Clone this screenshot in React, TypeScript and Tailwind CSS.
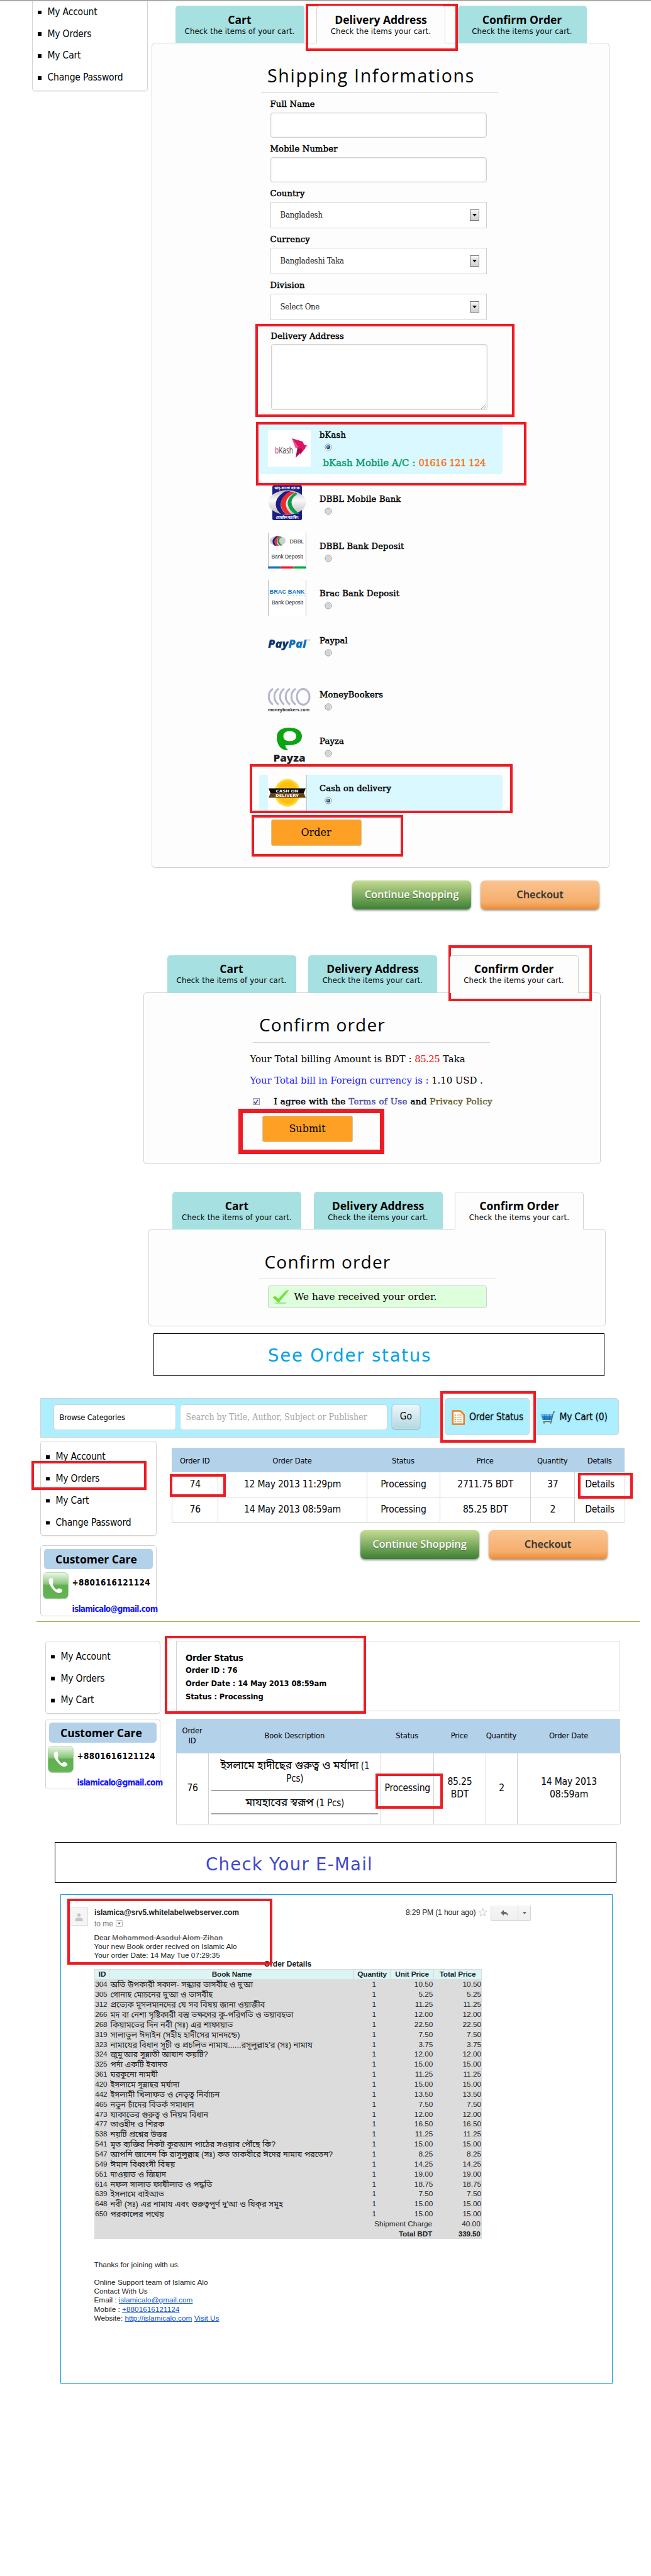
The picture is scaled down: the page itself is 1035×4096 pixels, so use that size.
import React from "react";

/* ---------- type styles ---------- */
const SANS = "font-['DejaVu_Sans_Condensed','DejaVu_Sans','Noto_Sans_Bengali',sans-serif] font-stretch-condensed";
const SLAB = "font-['DejaVu_Serif_Condensed','DejaVu_Serif',serif] font-stretch-condensed";
const WIDE_SLAB = "font-['DejaVu_Serif',serif]";
const HUMAN = "font-['Open_Sans','Noto_Sans',sans-serif]";
const ARIAL = "font-['Liberation_Sans','Noto_Sans_Bengali',Arial,sans-serif]";

/* ---------- shared widgets ---------- */
function Tabs({ active }: { active: number }) {
  const tabs = [
    ["Cart", "Check the items of your cart."],
    ["Delivery Address", "Check the items your cart."],
    ["Confirm Order", "Check the items your cart."],
  ];
  return (
    <div className="relative z-10 -mb-px flex h-[60px] gap-[19.5px] pl-[38px]">
      {tabs.map(([title, sub], i) => (
        <div
          key={title}
          className={
            "flex w-[205px] flex-col items-center rounded-t-[5px] pt-[10.5px] text-black " +
            (i === active ? "border border-b-0 border-[#d3d3d3] bg-[#fdfdfd]" : "border border-b-0 border-[#a6e0e0] bg-[#a6e0e0]")
          }
        >
          <div className={HUMAN + " whitespace-nowrap text-[17.5px] font-bold leading-[20px]"}>{title}</div>
          <div className={SANS + " whitespace-nowrap text-[13px] leading-[18px] tracking-[0.15px]"}>{sub}</div>
        </div>
      ))}
    </div>
  );
}

function PanelTitle({ children, type = "text-[28px] tracking-[1.2px]" }: { children: React.ReactNode; type?: string }) {
  return (
    <div className="ml-[173.5px] h-[79px] w-[377px] border-b border-[#d3d3d3] pl-[10px] pt-[30.5px]">
      <h1 className={HUMAN + " whitespace-nowrap font-medium leading-[40px] text-black " + type}>{children}</h1>
    </div>
  );
}

function SideMenu({ items, className }: { items: string[]; className: string }) {
  return (
    <ul className={"rounded-[5px] border border-[#d3d3d3] bg-white shadow-[0_1px_1px_rgba(0,0,0,0.08)] " + className}>
      {items.map((t) => (
        <li key={t} className={SANS + " flex h-[34.8px] items-center gap-[10px] whitespace-nowrap pl-[8px] text-[15.5px] tracking-[-0.2px] text-black"}>
          <span className="size-[5.5px] bg-black" />
          {t}
        </li>
      ))}
    </ul>
  );
}

function CustomerCare({ className }: { className: string }) {
  return (
    <div className={"rounded-[5px] border border-[#d3d3d3] bg-white " + className}>
      <div className={HUMAN + " mx-[5px] mt-[5px] flex h-[32px] items-center rounded-[5px] bg-[#b4d1ea] pl-[18px] text-[17.5px] font-bold text-black"}>
        Customer Care
      </div>
      <div className="ml-[3px] mt-[5px] flex gap-[5.5px]">
        <svg width="41" height="43" viewBox="0 0 41 43" className="shrink-0">
          <defs>
            <linearGradient id="tel" x1="0" y1="0" x2="0" y2="1">
              <stop offset="0" stopColor="#eef7ea" />
              <stop offset="0.44" stopColor="#8cc67c" />
              <stop offset="0.5" stopColor="#5fb04e" />
              <stop offset="1" stopColor="#62b652" />
            </linearGradient>
          </defs>
          <rect x="1" y="2" width="39" height="41" rx="6" fill="#000" opacity="0.25" />
          <rect x="0.5" y="0.5" width="40" height="41" rx="6" fill="url(#tel)" stroke="#8fc183" strokeWidth="0.6" />
          <path d="M12 9.500c2-1 3.500-.5 4 1.500.6 3 1 5 0 6.500-1 1.300 2 7 5 9.500 1.800 1.200 2.800-.8 4.500-1.500 1.800-.4 3.500.8 5 2.200 1.200 1.300.8 3-1 4.300-3 2-7.500 1.200-12-3.500C12.500 23 9.500 18 9.500 13c.1-1.800 1-3 2.500-3.500z" fill="#fff" />
        </svg>
        <div className={SANS + " whitespace-nowrap text-[13.3px] font-bold"}>
          <div className="mt-[7px] leading-[20px] tracking-[0.45px] text-black">+8801616121124</div>
          <div className="mt-[21.5px] leading-[20px] tracking-[-0.65px] text-[#1414ff]">islamicalo@gmail.com</div>
        </div>
      </div>
    </div>
  );
}

function CartButtons({ className }: { className: string }) {
  return (
    <div className={"flex gap-[15px] " + className}>
      <button className="h-[46.5px] w-[189px] rounded-[7px] bg-linear-to-b from-[#c5dc92] to-[#3a8034] font-['Open_Sans',sans-serif] text-[16.5px] font-semibold tracking-[-0.1px] text-white shadow-[0_2px_3px_rgba(0,0,0,0.4)] [text-shadow:0_1px_1px_rgba(0,0,0,0.4)]">
        Continue Shopping
      </button>
      <button className="h-[46.5px] w-[189px] rounded-[7px] bg-linear-to-b from-[#fbc491] via-[#f5ae6c] via-75% to-[#ef8a2c] font-['Open_Sans',sans-serif] text-[16.5px] font-semibold tracking-[-0.1px] text-[#333] shadow-[0_2px_3px_rgba(0,0,0,0.4)] [text-shadow:0_1px_1px_rgba(0,0,0,0.2)]">
        Checkout
      </button>
    </div>
  );
}

/* ---------- delivery form ---------- */
function Label({ children }: { children: React.ReactNode }) {
  return <div className={WIDE_SLAB + " h-[20px] whitespace-nowrap text-[13px] leading-[20px] tracking-[0.25px] text-black [-webkit-text-stroke:0.5px_#000]"}>{children}</div>;
}

function TextField({ label }: { label: string }) {
  return (
    <div className="h-[71px] pt-[7.500px]">
      <Label>{label}</Label>
      <div className="mt-[3px] h-[40.500px] w-[344px] rounded-[4px] border border-[#d0d0d0] bg-white shadow-[inset_0_0_3px_rgba(0,0,0,0.12)]" />
    </div>
  );
}

function SelectField({ label, value }: { label: string; value: string }) {
  return (
    <div className="h-[73px] pt-[8px]">
      <Label>{label}</Label>
      <div className="mt-[2.500px] flex h-[42.500px] w-[344px] items-center justify-between border border-[#d0d0d0] bg-white pl-[15px] pr-[11px]">
        <span className={SLAB + " text-[13px] tracking-[-0.2px] text-[#222]"}>{value}</span>
        <span className="flex h-[18.500px] w-[15px] items-center justify-center border border-[#777] bg-linear-to-b from-[#f4f4f4] to-[#cfcfcf]">
          <svg width="7" height="4" viewBox="0 0 7 4"><path d="M0 0h7L3.500 4z" fill="#000" /></svg>
        </span>
      </div>
    </div>
  );
}

function Radio({ on }: { on?: boolean }) {
  return (
    <svg width="12" height="12" viewBox="0 0 12 12" className="block">
      <circle cx="6" cy="6" r="5.100" fill="#f6f6f6" stroke="#8a8a8a" strokeWidth="0.9" />
      {on ? (
        <>
          <circle cx="6" cy="6" r="3.100" fill="#16507c" />
          <circle cx="5.400" cy="5.400" r="1.400" fill="#6cc3ee" />
        </>
      ) : (
        <circle cx="6" cy="6" r="3.400" fill="#d6d6d6" stroke="#bdbdbd" strokeWidth="0.6" />
      )}
    </svg>
  );
}

function DbblStripes() {
  return (
    <>
      <path d="M27 2C10 14 8 34 21 47h7C16 33 18 15 36 1z" fill="#1d1d84" />
      <path d="M35 2C18 13 17 33 28 47h9C24 32 26 14 43 4z" fill="#ef2b2d" />
      <path d="M44 4C27 16 28 32 42 46h8C34 31 34 17 47 7z" fill="#0f9a4a" />
    </>
  );
}

const Logos: Record<string, React.ReactNode> = {
  bKash: (
    <svg width="68" height="58" viewBox="0 0 68 58">
      <rect width="68" height="58" fill="#fff" />
      <text x="11" y="37" fontSize="15" fontFamily="Open Sans" textLength="29" lengthAdjust="spacingAndGlyphs" fill="#444">
        <tspan fill="#d9146a">b</tspan>Kash
      </text>
      <path d="M38 13l17 5 5 10-9 11-3-12z" fill="#dd1264" />
      <path d="M38 13l6 16 5-2z" fill="#f0508f" />
      <path d="M47 27l-3 17 12-13z" fill="#a70d4b" />
      <path d="M54 27l4-4 5 2-3 1-5 7z" fill="#e2136e" />
    </svg>
  ),
  dbblMobile: (
    <svg width="61" height="55" viewBox="0 0 61 55">
      <defs>
        <linearGradient id="silver" x1="0" y1="0" x2="0" y2="1">
          <stop offset="0" stopColor="#bbb" /><stop offset="0.4" stopColor="#fafafa" /><stop offset="1" stopColor="#bdbdbd" />
        </linearGradient>
      </defs>
      <rect x="7" y="0" width="47" height="55" rx="2.500" fill="#1d1d84" />
      <ellipse cx="30.500" cy="27" rx="30" ry="19.500" fill="url(#silver)" />
      <g transform="translate(0 8) scale(1 .8)"><DbblStripes /></g>
      <text x="30.500" y="6.200" fontSize="5.500" fontWeight="700" textAnchor="middle" fill="#fff" textLength="40" fontFamily="Noto Sans Bengali, sans-serif">ডাচ্-বাংলা ব্যাংক</text>
      <text x="30.500" y="52.500" fontSize="5.500" fontWeight="700" textAnchor="middle" fill="#fff" textLength="36" fontFamily="Noto Sans Bengali, sans-serif">মোবাইল ব্যাংকিং</text>
    </svg>
  ),
  dbbl: (
    <svg width="61" height="57" viewBox="0 0 61 57">
      <rect width="61" height="57" fill="#fff" />
      <path d="M.5 0v53M60.500 0v53" stroke="#b5b5b5" />
      <ellipse cx="15.500" cy="13" rx="12.500" ry="8" fill="#cfcfcf" />
      <g transform="translate(2 4.800) scale(.42 .34)"><DbblStripes /></g>
      <text x="34.500" y="17" fontSize="8.500" fontFamily="Liberation Sans" textLength="23" lengthAdjust="spacingAndGlyphs" fill="#222">DBBL</text>
      <text x="5.500" y="40.500" fontSize="9" fontFamily="Liberation Sans" textLength="50" lengthAdjust="spacingAndGlyphs" fill="#111">Bank Deposit</text>
      <path d="M0 53.500h20.500v3.500H0z" fill="#1d72b8" />
      <path d="M20.500 53.500h20v3.500h-20z" fill="#f0182d" />
      <path d="M40.500 53.500H61v3.500H40.500z" fill="#05a64b" />
    </svg>
  ),
  brac: (
    <svg width="61" height="57" viewBox="0 0 61 57">
      <rect width="61" height="57" fill="#fff" />
      <path d="M.5 0v57M60.500 0v57" stroke="#b5b5b5" />
      <text x="2.500" y="22" fontSize="9" fontWeight="700" fontFamily="Liberation Sans" textLength="56" lengthAdjust="spacingAndGlyphs" fill="#1476c6">BRAC BANK</text>
      <path d="M31 24.500h28" stroke="#7fb2dc" strokeWidth="0.8" strokeDasharray="1.500 3" />
      <text x="6" y="38.500" fontSize="9" fontFamily="Liberation Sans" textLength="50" lengthAdjust="spacingAndGlyphs" fill="#111">Bank Deposit</text>
    </svg>
  ),
  paypal: (
    <svg width="68" height="56" viewBox="0 0 68 56">
      <text x="0" y="32.500" fontSize="17" fontWeight="800" fontStyle="italic" fontFamily="Open Sans" textLength="61" lengthAdjust="spacingAndGlyphs" fill="#0a3470">
        Pay<tspan fill="#0e70c0">Pal</tspan>
      </text>
      <text x="62.500" y="22" fontSize="3" fontFamily="Liberation Sans" fill="#7fb2dc">SM</text>
    </svg>
  ),
  moneybookers: (
    <svg width="68" height="56" viewBox="0 0 68 56">
      <g fill="none" stroke="#b5b5cf" strokeWidth="3">
        <ellipse cx="56" cy="25" rx="10" ry="12.500" />
        <path d="M8 12C-1 18 -1 31 8 37.500M17 12c-9 6-9 19 0 25.500M26 12c-9 6-9 19 0 25.500M35 12c-9 6-9 19 0 25.500M44 12c-9 6-9 19 0 25.500" />
      </g>
      <text x="0" y="47.500" fontSize="6.800" fontWeight="700" fontFamily="Open Sans" textLength="66" lengthAdjust="spacingAndGlyphs" fill="#222">moneybookers.com</text>
    </svg>
  ),
  payza: (
    <svg width="68" height="66" viewBox="0 0 68 66">
      <path fillRule="evenodd" d="M33.500 0C22 0 14 5 14 15c0 11 5 17 10 19.500 3 1.300 6 1.500 8.500 1.500-3-2.500-5-5-4.700-8C46 29 54 23 54 13.500 54 5 46 0 33.500 0zm1 5.500c6 0 10.500 3 10.500 8s-4.500 8-10.500 8-10-3-10-8 4-8 10-8z" fill="#0ba50f" />
      <text x="8.500" y="54" fontSize="16" fontWeight="800" fontFamily="Open Sans" textLength="51" lengthAdjust="spacingAndGlyphs" fill="#222">Payza</text>
    </svg>
  ),
  cash: (
    <svg width="62" height="57" viewBox="0 0 62 57">
      <rect width="61" height="57" fill="#fff" />
      <path d="M61 0v57" stroke="#aaa" />
      <ellipse cx="31" cy="28.500" rx="20" ry="21.500" fill="#ffd21c" stroke="#ffe25c" strokeWidth="2" strokeDasharray="1.500 1" />
      <ellipse cx="31" cy="28.500" rx="16" ry="17.500" fill="#fdbf16" />
      <path d="M1 21.500h59l-3 7.500H4z" fill="#0b0b0b" />
      <path d="M4 29h53l3 7.500H1z" fill="#6b3d0c" />
      <text x="12.500" y="27.700" fontSize="5.800" fontWeight="700" fontFamily="DejaVu Sans" textLength="36" fill="#fff" lengthAdjust="spacingAndGlyphs">CASH ON</text>
      <text x="12" y="35" fontSize="5.800" fontWeight="700" fontFamily="DejaVu Sans" textLength="37" fill="#fff" lengthAdjust="spacingAndGlyphs">DELIVERY</text>
    </svg>
  ),
};

function PayRow({ logo, label, on, last }: { logo: string; label: string; on?: boolean; last?: string }) {
  return (
    <div className={"flex h-[56.500px] w-[387px] rounded-[4px] " + (on ? "bg-[#d9f8ff] " : "") + (last ?? "mb-[18.300px]")}>
      <div className="ml-[14.500px] w-[82px]">{Logos[logo]}</div>
      <div className="pt-[12px]">
        <Label>{label}</Label>
        <div className="ml-[7.500px] mt-[3px]"><Radio on={on} /></div>
      </div>
    </div>
  );
}

function DeliveryForm() {
  return (
    <div className="h-[1312px] w-[728px] rounded-[5px] border border-[#d3d3d3] bg-[#fdfdfd]">
      <PanelTitle type="text-[28.500px] tracking-[1.700px]">Shipping Informations</PanelTitle>
      <div className="ml-[188px]">
        <TextField label="Full Name" />
        <TextField label="Mobile Number" />
        <SelectField label="Country" value="Bangladesh" />
        <SelectField label="Currency" value="Bangladeshi Taka" />
        <SelectField label="Division" value="Select One" />
        <div className="ml-px h-[142.500px] pt-[16px]">
          <Label>Delivery Address</Label>
          <div className="mt-[2px] flex h-[104.500px] w-[344px] items-end justify-end rounded-[4px] border border-[#d0d0d0] bg-white p-px shadow-[inset_0_0_3px_rgba(0,0,0,0.12)]">
            <svg width="8" height="8" viewBox="0 0 8 8"><path d="M0 8l8-8M4 8l4-4" stroke="#777" strokeDasharray="1 .6" /></svg>
          </div>
        </div>
      </div>
      <div className="ml-[170px] pt-[19px]">
        <div className="mb-[18.800px] flex h-[83px] w-[387px] rounded-[4px] bg-[#d9f8ff]">
          <div className="ml-[14.500px] mt-[13px] w-[82px]">{Logos.bKash}</div>
          <div className="pt-[11.500px]">
            <Label>bKash</Label>
            <div className="ml-[7.500px] mt-[3px]"><Radio on /></div>
            <div className={WIDE_SLAB + " ml-[5.500px] mt-[6.500px] whitespace-nowrap text-[14.800px] leading-[24px] tracking-[0.15px] text-[#0a9a6b] [-webkit-text-stroke:0.5px_#0a9a6b]"}>
              bKash Mobile A/C : <span className="tracking-[-0.5px] text-[#ff6a10] [-webkit-text-stroke:0.4px_#ff6a10]">01616 121 124</span>
            </div>
          </div>
        </div>
        <PayRow logo="dbblMobile" label="DBBL Mobile Bank" />
        <PayRow logo="dbbl" label="DBBL Bank Deposit" />
        <PayRow logo="brac" label="Brac Bank Deposit" />
        <PayRow logo="paypal" label="Paypal" last="mb-[29.500px]" />
        <PayRow logo="moneybookers" label="MoneyBookers" />
        <PayRow logo="payza" label="Payza" />
        <PayRow logo="cash" label="Cash on delivery" on last="mb-[14.500px]" />
        <button className={WIDE_SLAB + " ml-[19px] h-[42px] w-[144px] rounded-[3px] border border-[#d8c3a0] bg-[#fda024] text-[16px] text-black"}>Order</button>
      </div>
    </div>
  );
}

/* ---------- order tables ---------- */
function OrdersTable() {
  const cols = "grid grid-cols-[73.300px_236.400px_116.400px_144.100px_70.100px_79.700px]";
  const rows = [
    ["74", "12 May 2013 11:29pm", "Processing", "2711.75 BDT", "37", "Details"],
    ["76", "14 May 2013 08:59am", "Processing", "85.25 BDT", "2", "Details"],
  ];
  return (
    <div className={SANS + " w-[720px] text-black"}>
      <div className={cols + " h-[39px] items-center bg-[#b4d1ea] pt-[2px] text-center text-[12.800px] tracking-[-0.15px]"}>
        {["Order ID", "Order Date", "Status", "Price", "Quantity", "Details"].map((h) => <span key={h}>{h}</span>)}
      </div>
      {rows.map((r) => (
        <div key={r[0]} className={cols + " h-[39.750px] border-b border-l border-[#d3d3d3] text-center text-[15.500px] tracking-[-0.2px]"}>
          {r.map((c, i) => (
            <span key={i} className="flex items-center justify-center whitespace-nowrap border-r border-[#d3d3d3] pt-[1px]">{c}</span>
          ))}
        </div>
      ))}
    </div>
  );
}

function DetailTable() {
  const cols = "grid grid-cols-[51.200px_274.300px_83.500px_82.800px_50.400px_163.800px]";
  const cell = "flex flex-col items-center justify-center border-r border-[#d3d3d3]";
  return (
    <div className={SANS + " w-[706px] text-center text-black"}>
      <div className={cols + " h-[54.500px] items-center bg-[#b4d1ea] text-[12.800px] leading-[15.800px] tracking-[-0.15px]"}>
        <span>Order<br />ID</span><span>Book Description</span><span>Status</span><span>Price</span><span>Quantity</span><span>Order Date</span>
      </div>
      <div className={cols + " h-[113.500px] border-b border-l border-[#d3d3d3] text-[15.500px] leading-[19.500px] tracking-[-0.2px]"}>
        <div className={cell}>76</div>
        <div className="border-r border-[#d3d3d3] px-[4px] pt-[9px]">
          <div className="text-[15px] leading-[20.500px]"><span className="text-[17.500px]">ইসলামে হাদীছের গুরুত্ব ও মর্যাদা</span> (1<br />Pcs)</div>
          <div className="mt-[7px] h-[2px] bg-[#a5a5a5]" />
          <div className="mt-[8px] text-[15px] leading-[20px]"><span className="text-[17.500px]">মাযহাবের স্বরূপ</span> (1 Pcs)</div>
          <div className="mt-[6px] h-[2px] bg-[#a5a5a5]" />
        </div>
        <div className={cell}>Processing</div>
        <div className={cell}><span>85.25</span><span>BDT</span></div>
        <div className={cell}>2</div>
        <div className={cell}><span>14 May 2013</span><span>08:59am</span></div>
      </div>
    </div>
  );
}

const BOOKS: [string, string, string][] = [
  ["304", "অতি উপকারী সকাল- সন্ধ্যার তাসবীহ ও দু'আ", "10.50"],
  ["305", "গোনাহ মোচনের দু'আ ও তাসবীহ", "5.25"],
  ["312", "প্রত্যেক মুসলমানদের যে সব বিষয় জানা ওয়াজীব", "11.25"],
  ["266", "মদ বা নেশা সৃষ্টিকারী বস্তু ভক্ষণের কু-পরিণতি ও ভয়াবহতা", "12.00"],
  ["268", "কিয়ামতের দিন নবী (সঃ) এর শাফায়াত", "22.50"],
  ["319", "সালাতুল ঈদাইন (সহীহ হাদীসের মানদন্ডে)", "7.50"],
  ["323", "নামাযের বিধান সূচী ও প্রচলিত নামায......রসূলুল্লাহ'র (সঃ) নামায", "3.75"],
  ["324", "জুমু'আর সুন্নাতী আযান কয়টি?", "12.00"],
  ["325", "পর্দা একটি ইবাদত", "15.00"],
  ["361", "ঘরকুনো নামযী", "11.25"],
  ["420", "ইসলামে সুন্নাহর মর্যাদা", "15.00"],
  ["442", "ইসলামী খিলাফত ও নেতৃত্ব নির্বাচন", "13.50"],
  ["465", "নতুন চাঁদের বিতর্ক সমাধান", "7.50"],
  ["473", "যাকাতের গুরুত্ব ও নিয়ম বিধান", "12.00"],
  ["477", "তাওহীদ ও শিরক", "16.50"],
  ["538", "নয়টি প্রশ্নের উত্তর", "11.25"],
  ["541", "মৃত ব্যক্তির নিকট কুরআন পাঠের সওয়াব পৌঁছে কি?", "15.00"],
  ["547", "আপনি জানেন কি রাসুলুল্লাহ (সঃ) কত তাকবীরে ঈদের নামায পরতেন?", "8.25"],
  ["549", "ঈমান বিধ্বংসী বিষয়", "14.25"],
  ["551", "দাওয়াত ও জিহাদ", "19.00"],
  ["614", "নফল সালাত ফাযীলাত ও পদ্ধতি", "18.75"],
  ["639", "ইসলামে বাইআত", "7.50"],
  ["648", "নবী (সঃ) এর নামায এবং গুরুত্বপূর্ণ দু'আ ও যিক্‌র সমূহ", "15.00"],
  ["650", "পরকালের পথেয়", "15.00"],
];

function MailTable() {
  const cols = "grid grid-cols-[22.500px_386px_57px_66.500px_75px] gap-x-[1.700px]";
  return (
    <div className="h-[429px] w-[616px] bg-[#dcdcdc] px-[1.800px] pt-[1.800px] text-[11.800px] leading-[15.860px]">
      <div className={cols + " mb-[2px] h-[14px] text-center font-bold leading-[14.500px] tracking-[-0.15px]"}>
        {["ID", "Book Name", "Quantity", "Unit Price", "Total Price"].map((h) => <span key={h} className="bg-[#dbf5f5]">{h}</span>)}
      </div>
      {BOOKS.map(([id, name, price]) => (
        <div key={id} className={cols + " h-[15.860px] whitespace-nowrap"}>
          <span className="tracking-[-0.2px]">{id}</span>
          <span className="h-[15.860px] text-[12.800px]">{name}</span>
          <span className="pl-[6px] text-center">1</span>
          <span className="text-right">{price}</span>
          <span className="text-right">{price}</span>
        </div>
      ))}
      <div className="flex h-[15.860px] justify-end"><span>Shipment Charge</span><span className="w-[76.700px] text-right">40.00</span></div>
      <div className="flex h-[15.860px] justify-end font-bold tracking-[-0.2px]"><span>Total BDT</span><span className="w-[76.700px] text-right">339.50</span></div>
    </div>
  );
}

function Mail() {
  return (
    <div className={ARIAL + " ml-[96px] h-[778px] w-[877.500px] border border-[#1c9ad6] text-[12px] leading-[14.100px] text-[#222]"}>
      <div className="flex pt-[17px]">
        <div className="ml-[14.500px] mt-[3px] flex h-[28.500px] w-[28.500px] items-end justify-center border border-[#ddd] bg-[#f5f5f5] pb-[6px]">
          <svg width="13" height="13" viewBox="0 0 13 13"><circle cx="6.500" cy="3" r="2.800" fill="#c6c6c6" /><path d="M.5 13V10.500C.5 8 3 7 6.500 7s6 1 6 3.500V13z" fill="#c6c6c6" /></svg>
        </div>
        <div className="ml-[10px] w-[495px] whitespace-nowrap">
          <div className="mt-[4px] font-bold tracking-[-0.05px]">islamica@srv5.whitelabelwebserver.com</div>
          <div className="mt-[3.500px] flex items-center gap-[4px] text-[#777]">
            to me
            <span className="flex size-[10.500px] items-center justify-center rounded-[1px] border border-[#bbb]"><svg width="5" height="3" viewBox="0 0 5 3"><path d="M0 0h5L2.500 3z" fill="#555" /></svg></span>
          </div>
        </div>
        <div className="mt-[4px] whitespace-nowrap tracking-[-0.1px]">8:29 PM (1 hour ago)</div>
        <svg width="15" height="15" viewBox="0 0 24 24" className="ml-[4px] mt-[3px]"><path d="M12 2l2.700 7.200 7.600.300-6 4.700 2.100 7.300L12 17.200l-6.400 4.300 2.100-7.300-6-4.700 7.600-.300z" fill="#fff" stroke="#c8c8c8" strokeWidth="1.600" /></svg>
        <div className="ml-[5px] flex h-[24px] w-[64px] rounded-b-[2px] border border-t-0 border-[#d5d5d5] bg-linear-to-b from-[#f6f6f6] to-[#efefef]">
          <span className="flex w-[43px] items-center justify-center border-r border-[#d5d5d5]">
            <svg width="12" height="10" viewBox="0 0 12 10"><path d="M5 0v2.800c4.500.2 6.500 2.500 7 7C10.300 7.300 8.500 6.300 5 6.300V9L0 4.500z" fill="#6a6a6a" /></svg>
          </span>
          <span className="flex flex-1 items-center justify-center"><svg width="6" height="4" viewBox="0 0 6 4"><path d="M0 0h6L3 4z" fill="#6a6a6a" /></svg></span>
        </div>
      </div>
      <div className="ml-[52.500px]">
        <div className="mt-[8.500px] whitespace-nowrap text-[11.800px]">
          <div>Dear <span className="tracking-[0.5px] text-[#444] line-through">Mohammod Asadul Alom Zihan</span></div>
          <div>Your new Book order recived on Islamic Alo</div>
          <div>Your order Date: 14 May Tue 07:29:35</div>
        </div>
        <div className="w-[616px] text-center font-bold">Order Details</div>
        <MailTable />
        <div className="mt-[34.500px] whitespace-nowrap text-[11.800px]">
          <p className="mb-[14.100px]">Thanks for joining with us.</p>
          <p>Online Support team of Islamic Alo</p>
          <p>Contact With Us</p>
          <p>Email : <a className="text-[#1155cc] underline">islamicalo@gmail.com</a></p>
          <p>Mobile : <a className="text-[#1155cc] underline">+8801616121124</a></p>
          <p>Website: <a className="text-[#1155cc] underline">http://islamicalo.com</a> <a className="text-[#1155cc] underline">Visit Us</a></p>
        </div>
      </div>
    </div>
  );
}

/* Red callout frames that lie over the screens */
function Callouts() {
  const c = "absolute border-4 border-[#ed1c24] ";
  return (
    <>
      <div className={c + "left-[486px] top-[6px] h-[75px] w-[242px]"} />
      <div className={c + "left-[405.500px] top-[514.500px] h-[148.500px] w-[412px]"} />
      <div className={c + "left-[407px] top-[671px] h-[101px] w-[430px]"} />
      <div className={c + "left-[397px] top-[1214.500px] h-[78px] w-[417.500px]"} />
      <div className={c + "left-[400px] top-[1295.500px] h-[66px] w-[240.500px]"} />
      <div className={c + "left-[713px] top-[1503px] h-[89px] w-[228px]"} />
      <div className="absolute left-[379px] top-[1763px] h-[72px] w-[232px] border-[7px] border-[#ed1c24]" />
      <div className={c + "left-[699.500px] top-[2211.500px] h-[82px] w-[152px]"} />
      <div className={c + "left-[50px] top-[2322.500px] h-[46.500px] w-[182.500px]"} />
      <div className={c + "left-[270px] top-[2343.500px] h-[36px] w-[89px]"} />
      <div className={c + "left-[919px] top-[2342px] h-[41px] w-[87px]"} />
      <div className={c + "left-[261.500px] top-[2600.500px] h-[124px] w-[320.500px]"} />
      <div className={c + "left-[597px] top-[2820px] h-[56px] w-[106.500px]"} />
      <div className={c + "left-[106.500px] top-[3019px] h-[105px] w-[326.500px]"} />
    </>
  );
}

export default function App() {
  return (
    <div className="relative h-[4096px] w-[1035px] overflow-hidden bg-white">
      {/* Delivery address step */}
      <section className="h-[1486px] border-t-2 border-[#a9a9a9]">
        <div className="flex">
          <SideMenu items={["My Account", "My Orders", "My Cart", "Change Password"]} className="ml-[51px] h-[143px] w-[184px] rounded-t-none border-t-0" />
          <div className="ml-[5.500px] w-[728px] pt-[7px]">
            <Tabs active={1} />
            <DeliveryForm />
            <CartButtons className="ml-[319.500px] mt-[19.500px]" />
          </div>
        </div>
      </section>

      {/* Confirm order step */}
      <section className="h-[378px] pl-[227.500px] pt-[32.500px]">
        <Tabs active={2} />
        <div className="h-[273px] w-[727px] rounded-[5px] border border-[#d3d3d3] bg-[#fdfdfd]">
          <PanelTitle>Confirm order</PanelTitle>
          <div className={WIDE_SLAB + " ml-[169px] whitespace-nowrap pt-[9px] text-[14.900px] leading-[34px] text-black"}>
            <p>Your Total billing Amount is BDT : <span className="tracking-[-0.5px] text-[#f00]">85.25</span> Taka</p>
            <p className="tracking-[-0.05px]"><span className="text-[#1a1aff]">Your Total bill in Foreign currency is :</span> 1.10 USD .</p>
            <p className="flex items-center text-[13.400px] tracking-[0.350px]">
              <span className="ml-[4px] mr-[22.500px] flex size-[11.500px] items-center justify-center border border-[#999] bg-[#f0f0f0]">
                <svg width="8" height="8" viewBox="0 0 8 8"><path d="M1 4l2.200 3L7 .8" fill="none" stroke="#3b4fa0" strokeWidth="1.500" /></svg>
              </span>
              <span className="[-webkit-text-stroke:0.5px_currentColor]">I agree with the <span className="text-[#5050a8] [-webkit-text-stroke-color:#5050a8]">Terms of Use</span> and <span className="text-[#66632f] [-webkit-text-stroke-color:#66632f]">Privacy Policy</span></span>
            </p>
          </div>
          <button className={WIDE_SLAB + " ml-[188px] mt-[5px] block h-[42px] w-[144px] rounded-[3px] border border-[#d8c3a0] bg-[#fda024] text-[16px] text-black"}>Submit</button>
        </div>
      </section>

      {/* Order received */}
      <section className="h-[335px] pl-[236px] pt-[31px]">
        <Tabs active={2} />
        <div className="h-[155px] w-[727px] rounded-[5px] border border-[#d3d3d3] bg-[#fdfdfd]">
          <PanelTitle>Confirm order</PanelTitle>
          <div className={WIDE_SLAB + " ml-[188.500px] mt-[10px] flex h-[36px] w-[348px] items-center whitespace-nowrap rounded-[4px] border border-[#cfcfcf] bg-[#deffdc] pl-[6px] text-[15.300px] text-black"}>
            <svg width="27" height="23" viewBox="0 0 27 23" className="mr-[8px]">
              <ellipse cx="13" cy="21" rx="10" ry="1.500" fill="#b5d9b0" />
              <path d="M.5 12l4-2.500 5 4.500L22 1l4.500-.5L10.500 20H9z" fill="#74e03a" />
            </svg>
            We have received your order.
          </div>
        </div>
        <div className="ml-[8px] mt-[11px] h-[68px] w-[717px] border border-black pl-[181px] pt-[14px]">
          <h2 className="whitespace-nowrap font-['DejaVu_Sans'] text-[27.500px] leading-[40px] tracking-[1.800px] text-[#00a2e8]">See Order status</h2>
        </div>
      </section>

      {/* Orders list */}
      <section className="h-[381px] pt-[24px]">
        <div className={SANS + " ml-[64px] flex text-[15.500px] tracking-[-0.2px] text-black"}>
          <div className="flex h-[62.500px] w-[634.500px] items-start border border-[#d3d3d3] bg-[#aeefff] pl-[19.500px] pt-[9px]">
            <div className="flex h-[40.500px] w-[195px] items-center rounded-[5px] border border-[#d3d3d3] bg-white pl-[9px] text-[12.800px] tracking-[-0.2px]">Browse Categories</div>
            <div className={SLAB + " ml-[6px] flex h-[40.500px] w-[330px] items-center whitespace-nowrap rounded-[5px] border border-[#d3d3d3] bg-white pl-[9px] text-[14px] tracking-[0.05px] text-[#a5a5a5]"}>Search by Title, Author, Subject or Publisher</div>
            <button className="ml-[7px] h-[39px] w-[45.500px] rounded-[5px] border border-[#c4dbe0] bg-linear-to-b from-[#eef6f9] to-[#b4d8e2] shadow-[0_1px_2px_rgba(0,0,0,0.3)]">Go</button>
          </div>
          <div className="ml-[8px] flex h-[59px] w-[135.500px] items-center gap-[7px] whitespace-nowrap rounded-[5px] border border-[#d3d3d3] bg-[#aeefff] pl-[10px] pt-[2px] [text-shadow:0_1px_2px_rgba(0,0,0,0.3)]">
            <svg width="21.500" height="24" viewBox="0 0 21 24" className="shrink-0">
              <path d="M1.500 1.500h12l6 6v15h-18z" fill="#fff" stroke="#f47b20" strokeWidth="2.600" strokeLinejoin="round" />
              <path d="M4.500 8h2M4.500 11.500h2M4.500 15h2M4.500 18.500h2" stroke="#f47b20" strokeWidth="1.400" />
              <path d="M8 8h8.500M8 11.500h8.500M8 15h8.500M8 18.500h8.500" stroke="#f9b27c" strokeWidth="1.600" />
            </svg>
            Order Status
          </div>
          <div className="ml-[6.500px] flex h-[59px] w-[135.500px] items-center gap-[7px] whitespace-nowrap rounded-[5px] border border-[#d3d3d3] bg-[#aeefff] pl-[9px] pt-[2px] [text-shadow:0_1px_2px_rgba(0,0,0,0.3)]">
            <svg width="24" height="20" viewBox="0 0 24 20" className="shrink-0">
              <path d="M.5 4.500h19.500l-1.500 9.500H4z" fill="#1e86cf" />
              <path d="M.5 4.500h19.500l-.5 3H1.300z" fill="#79bdea" />
              <path d="M6 5l1 9M10.500 5v9M15 5l-.5 9" stroke="#0f5f9c" strokeWidth="0.700" />
              <path d="M23.500 1h-2.500l-3.500 15.500H4.500" fill="none" stroke="#666" strokeWidth="1.400" />
              <circle cx="6" cy="18.200" r="1.500" fill="#888" /><circle cx="16.500" cy="18.200" r="1.500" fill="#888" />
            </svg>
            My Cart (0)
          </div>
        </div>
        <div className="mt-[5px] flex">
          <div className="ml-[64px] w-[184.500px]">
            <SideMenu items={["My Account", "My Orders", "My Cart", "Change Password"]} className="h-[151.500px] pt-[8px]" />
            <CustomerCare className="mt-[15px] h-[113px]" />
          </div>
          <div className="ml-[24.500px] pt-[11.500px]">
            <OrdersTable />
            <CartButtons className="ml-[299.500px] mt-[12px]" />
          </div>
        </div>
        <div className="ml-[58px] mt-[8px] h-px w-[959px] bg-[#8fb13f]" />
      </section>

      {/* Order detail */}
      <section className="h-[432px] pt-[29px]">
        <div className="flex">
          <div className="ml-[72px] w-[183px]">
            <SideMenu items={["My Account", "My Orders", "My Cart"]} className="h-[116px] pt-[7px]" />
            <CustomerCare className="mt-[8px] h-[112px]" />
          </div>
          <div className="ml-[25px] w-[706px]">
            <div className={SANS + " h-[112px] whitespace-nowrap border border-[#d3d3d3] bg-white pl-[14px] pt-[15.500px] text-[12.800px] font-bold leading-[20.800px] tracking-[-0.1px] text-black"}>
              <p className="text-[14.800px] tracking-[-0.4px]">Order Status</p>
              <p>Order ID : 76</p>
              <p>Order Date : 14 May 2013 08:59am</p>
              <p>Status : Processing</p>
            </div>
            <div className="mt-[12px]"><DetailTable /></div>
          </div>
        </div>
        <div className="ml-[87px] mt-[28px] h-[65px] w-[893px] border border-black pl-[239px] pt-[14px]">
          <h2 className="whitespace-nowrap font-['DejaVu_Sans'] text-[27.500px] leading-[40px] tracking-[1.300px] text-[#3f48cc]">Check Your E-Mail</h2>
        </div>
      </section>

      <Mail />
      <Callouts />
    </div>
  );
}
